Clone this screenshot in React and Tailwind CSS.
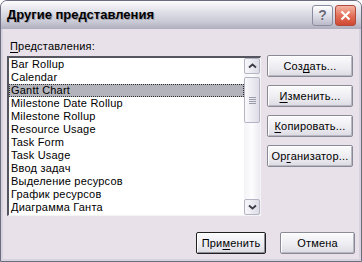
import React from "react";

const views = [
  "Bar Rollup",
  "Calendar",
  "Gantt Chart",
  "Milestone Date Rollup",
  "Milestone Rollup",
  "Resource Usage",
  "Task Form",
  "Task Usage",
  "Ввод задач",
  "Выделение ресурсов",
  "График ресурсов",
  "Диаграмма Ганта",
];

function Btn({ children, className = "", isDefault = false }) {
  return (
    <button
      className={`h-[22px] flex items-center justify-center rounded-[2px] bg-[linear-gradient(to_bottom,#fbfbfd,#ecebf0_60%,#dcdbe3)] text-[11px] tracking-[0.2px] text-black ${
        isDefault
          ? "border border-[#202020] shadow-[inset_1px_1px_0_#ffffff,inset_-1px_-1px_0_#8e8e98]"
          : "border border-[#8a8a96] shadow-[inset_1px_1px_0_#ffffff,inset_-1px_-1px_0_#b8b8c2]"
      } ${className}`}
    >
      {children}
    </button>
  );
}

function U({ children }) {
  return <span className="underline underline-offset-[2px]">{children}</span>;
}

function ScrollArrow({ down = false }) {
  return (
    <div className="h-[16px] w-[16px] rounded-[2px] border border-[#b5b4c4] bg-[linear-gradient(to_right,#f8f8fb,#dcdce6)] flex items-center justify-center">
      <svg width="9" height="6" viewBox="0 0 9 6">
        <path
          d={down ? "M1 1.5 L4.5 4.5 L8 1.5" : "M1 4.5 L4.5 1.5 L8 4.5"}
          fill="none"
          stroke="#3a3a48"
          strokeWidth="1.8"
        />
      </svg>
    </div>
  );
}

function Scrollbar() {
  return (
    <div className="w-[16px] flex flex-col bg-[linear-gradient(to_right,#f3f3f7,#fdfdfe_50%,#ebebf1)]">
      <ScrollArrow />
      <div className="flex-1 pt-[3px]">
        <div className="h-[46px] rounded-[2px] border border-[#b5b4c4] bg-[linear-gradient(to_right,#fafafc,#dedde8)] flex flex-col items-center justify-center gap-[1px]">
          <div className="w-[7px] h-[1px] bg-[#9a9aa8]" />
          <div className="w-[7px] h-[1px] bg-[#9a9aa8]" />
          <div className="w-[7px] h-[1px] bg-[#9a9aa8]" />
          <div className="w-[7px] h-[1px] bg-[#9a9aa8]" />
        </div>
      </div>
      <ScrollArrow down />
    </div>
  );
}

export default function App() {
  return (
    <div
      className="w-[362px] h-[262px] bg-white"
      style={{ fontFamily: '"Liberation Sans", Arial, sans-serif' }}
    >
      <div className="w-[362px] h-[262px] flex flex-col rounded-t-[7px] overflow-hidden border border-[#6c6c80] bg-[#d6d2de]">
        {/* Title bar */}
        <div className="h-[28px] flex items-center pl-[6px] pr-[5px] bg-[linear-gradient(to_bottom,#fdfdfe,#e2e2ea_35%,#c9c9d5_75%,#aeaebe)]">
          <span className="text-[13px] font-bold text-black [text-shadow:1px_1px_0_#a0a0ac]">
            Другие представления
          </span>
          <div className="ml-auto flex items-center gap-[2px]">
            <div className="w-[21px] h-[21px] rounded-[3px] border border-[#8c8ca0] bg-[linear-gradient(to_bottom,#ffffff,#d8d8e4_60%,#babac8)] flex items-center justify-center text-[14px] font-bold text-[#6a6a7c] [text-shadow:0_0_1px_#fff]">
              ?
            </div>
            <div className="w-[21px] h-[21px] rounded-[3px] border border-[#b04a3c] bg-[linear-gradient(to_bottom,#f4b6a4,#e26b54_55%,#cf4a34)] flex items-center justify-center">
              <svg width="11" height="11" viewBox="0 0 11 11">
                <path d="M1.5 1.5 L9.5 9.5 M9.5 1.5 L1.5 9.5" stroke="#ffffff" strokeWidth="2" />
              </svg>
            </div>
          </div>
        </div>

        {/* Body */}
        <div className="flex-1 mx-[2px] mb-[2px] bg-[#e9e1e9] flex flex-col text-[11px] text-black">
          <div className="pl-[7px] pt-[11px] h-[27px] leading-[13px] tracking-[0.2px]">
            <U>П</U>редставления:
          </div>

          <div className="flex pl-[4px]">
            {/* List box */}
            <div className="w-[254px] h-[160px] flex border-t-2 border-l-2 border-t-[#555560] border-l-[#555560] border-b border-r border-b-[#f4f4f4] border-r-[#f4f4f4] bg-white">
              <div className="flex-1 flex flex-col tracking-[0.2px]">
                {views.map((v) => (
                  <div
                    key={v}
                    className={`h-[13px] leading-[12px] pl-[2px] whitespace-nowrap ${
                      v === "Gantt Chart"
                        ? "bg-[#b3b3bb] outline outline-1 outline-dotted outline-[#303030] -outline-offset-1"
                        : ""
                    }`}
                  >
                    {v}
                  </div>
                ))}
              </div>
              <Scrollbar />
            </div>

            {/* Side buttons */}
            <div className="ml-[6px] flex flex-col gap-[8px]">
              <Btn className="w-[86px] -mt-[1px]">
                Соз<U>д</U>ать...
              </Btn>
              <Btn className="w-[86px]">
                <U>И</U>зменить...
              </Btn>
              <Btn className="w-[86px]">
                <U>К</U>опировать...
              </Btn>
              <Btn className="w-[86px]">
                Ор<U>г</U>анизатор...
              </Btn>
            </div>
          </div>

          <div className="flex justify-end gap-[14px] pr-[4px] mt-[16px]">
            <Btn className="w-[70px]" isDefault>
              При<U>м</U>енить
            </Btn>
            <Btn className="w-[75px]">Отмена</Btn>
          </div>
        </div>
      </div>
    </div>
  );
}
